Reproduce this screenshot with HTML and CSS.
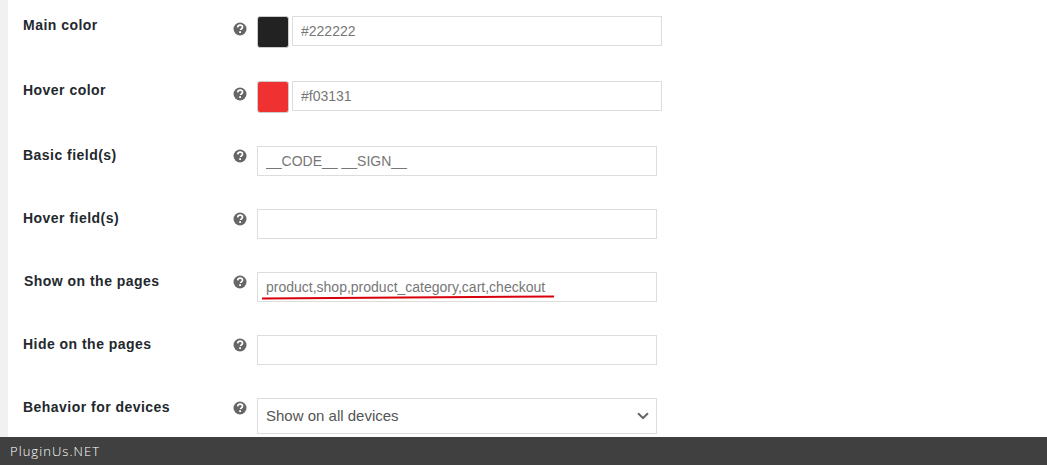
FILE: index.html
```html
<!DOCTYPE html>
<html lang="en">
<head>
    <meta charset="UTF-8">
    <title>Settings</title>
    <link rel="stylesheet" href="styles.css">
</head>
<body>
    <svg class="icon-defs" width="0" height="0">
        <symbol id="help" viewBox="0 0 14 14">
            <circle cx="7" cy="7" r="6.5" fill="#666"/>
            <path d="M4.7 5.4C4.8 4 5.8 3.2 7.1 3.2c1.4 0 2.4.8 2.4 2 0 1-.6 1.4-1.2 1.8-.5.3-.7.5-.7 1.1" fill="none" stroke="#fff" stroke-width="1.7"/>
            <rect x="6.2" y="9.2" width="1.8" height="1.8" fill="#fff"/>
        </symbol>
    </svg>

    <div class="page">
        <div class="settings">
            <div class="row row-color">
                <div class="row-label">Main color</div>
                <svg class="help"><use href="#help"/></svg>
                <div class="field">
                    <span class="swatch swatch-dark"></span>
                    <input class="text-input color-input" type="text" value="#222222">
                </div>
            </div>
            <div class="row row-color">
                <div class="row-label">Hover color</div>
                <svg class="help"><use href="#help"/></svg>
                <div class="field">
                    <span class="swatch swatch-red"></span>
                    <input class="text-input color-input" type="text" value="#f03131">
                </div>
            </div>
            <div class="row">
                <div class="row-label">Basic field(s)</div>
                <svg class="help"><use href="#help"/></svg>
                <div class="field">
                    <input class="text-input" type="text" value="__CODE__ __SIGN__">
                </div>
            </div>
            <div class="row">
                <div class="row-label">Hover field(s)</div>
                <svg class="help"><use href="#help"/></svg>
                <div class="field">
                    <input class="text-input" type="text">
                </div>
            </div>
            <div class="row">
                <div class="row-label label-nudged">Show on the pages</div>
                <svg class="help"><use href="#help"/></svg>
                <div class="field">
                    <input class="text-input" type="text" value="product,shop,product_category,cart,checkout">
                    <!-- red marker drawn over the screenshot -->
                    <svg class="marker" width="300" height="6"><path d="M1 4.4 L293 2.4" stroke="#d8000c" stroke-width="2" fill="none"/></svg>
                </div>
            </div>
            <div class="row">
                <div class="row-label">Hide on the pages</div>
                <svg class="help"><use href="#help"/></svg>
                <div class="field">
                    <input class="text-input" type="text">
                </div>
            </div>
            <div class="row">
                <div class="row-label">Behavior for devices</div>
                <svg class="help"><use href="#help"/></svg>
                <div class="field">
                    <div class="select-box">
                        <span class="select-text">Show on all devices</span>
                        <svg width="12" height="8" viewBox="0 0 12 8"><path d="M1 1.2 L6 6 L11 1.2" fill="none" stroke="#666" stroke-width="2"/></svg>
                    </div>
                </div>
            </div>
        </div>
        <div class="footer">PluginUs.NET</div>
    </div>
</body>
</html>
```

FILE: styles.css
```css
* {
    box-sizing: border-box;
}

html, body {
    height: 100%;
}

body {
    margin: 0;
    background: #fff;
    color: #23282d;
    font-family: "Liberation Sans", Arial, sans-serif;
    overflow: hidden;
}

.icon-defs {
    display: block;
    height: 0;
}

.page {
    height: 100vh;
    display: flex;
    flex-direction: column;
}

.settings {
    flex: 1;
    min-height: 0;
    overflow: hidden;
    padding: 16px 0 0 15px;
    border-left: 8px solid #f1f1f1;
}

.row {
    display: grid;
    grid-template-columns: 210px 24px 1fr;
    margin-bottom: 33px;
}

.row-label {
    padding-top: 1px;
    font-size: 14px;
    font-weight: bold;
    line-height: 17px;
    letter-spacing: 0.47px;
}

.label-nudged {
    margin-left: 1px;
}

.help {
    width: 14px;
    height: 14px;
    margin-top: 3px;
}

.row-color .help {
    margin-top: 6px;
}

.field {
    position: relative;
    display: flex;
    width: 400px;
}

.row-color .field {
    width: 405px;
}

.swatch {
    flex: none;
    width: 32px;
    height: 32px;
    margin-right: 3px;
    border: 1px solid #ccc;
    border-radius: 3px;
}

.swatch-dark {
    background: #222222;
}

.swatch-red {
    background: #f03131;
}

.text-input {
    width: 100%;
    height: 30px;
    padding: 0 8px;
    border: 1px solid #ddd;
    border-radius: 0;
    outline: none;
    background: #fff;
    color: #777;
    font-family: "Liberation Sans", Arial, sans-serif;
    font-size: 14px;
}

.select-box {
    width: 100%;
    height: 36px;
    padding: 0 7px 0 8px;
    border: 1px solid #ddd;
    display: flex;
    align-items: center;
    justify-content: space-between;
    color: #555;
    font-size: 15px;
}

.select-text {
    padding-bottom: 2px;
}

.marker {
    position: absolute;
    left: 4px;
    top: 22px;
}

.footer {
    flex: none;
    height: 28px;
    padding-left: 10px;
    background: #404040;
    color: #fff;
    font-family: "Open Sans", sans-serif;
    font-size: 13px;
    font-weight: 300;
    line-height: 28px;
    letter-spacing: 1.05px;
}
```
